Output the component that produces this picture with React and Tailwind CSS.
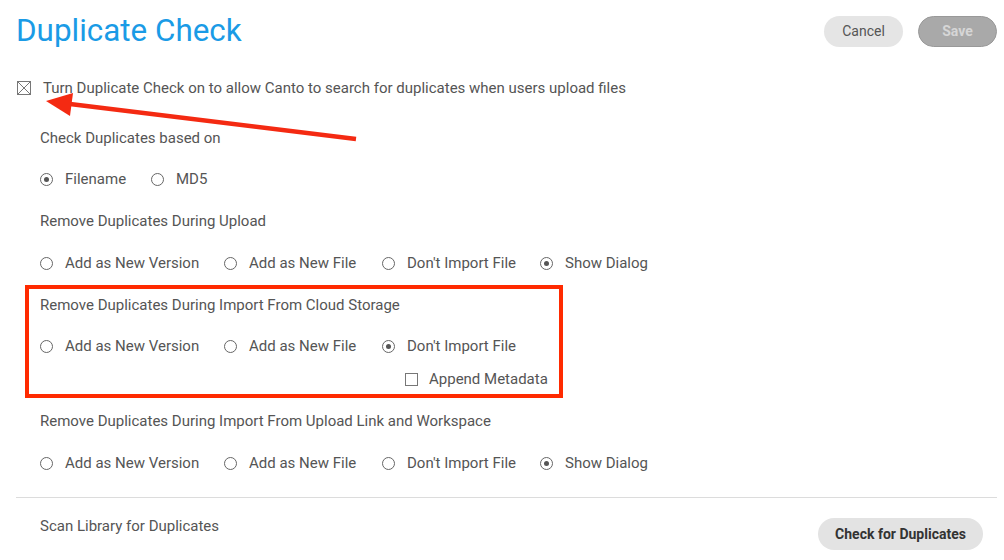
import React from 'react';

const Radio = ({ checked, label, className = '' }) => (
  <label className={`flex items-center ${className}`}>
    <span className="w-[13px] h-[13px] rounded-full border-[1.5px] border-[#666] flex items-center justify-center shrink-0">
      {checked && <span className="w-[5px] h-[5px] rounded-full bg-[#555]" />}
    </span>
    <span className="ml-[12px] text-[15px] text-[#555] whitespace-nowrap">{label}</span>
  </label>
);

const SectionLabel = ({ children, className = 'h-[42px]' }) => (
  <div className={`${className} flex items-center text-[15px] text-[#555] whitespace-nowrap`}>{children}</div>
);

const fourOptions = (selected) => (
  <div className="h-[42px] flex items-center">
    <Radio label="Add as New Version" checked={selected === 0} className="w-[184px]" />
    <Radio label="Add as New File" checked={selected === 1} className="w-[158px]" />
    <Radio label="Don't Import File" checked={selected === 2} className="w-[158px]" />
    <Radio label="Show Dialog" checked={selected === 3} />
  </div>
);

export default function App() {
  return (
    <div className="relative w-[1004px] h-[560px] bg-white overflow-hidden" style={{ fontFamily: 'Roboto, "Liberation Sans", sans-serif' }}>
      {/* header */}
      <div className="h-[62px] flex items-center justify-between pl-[16px] pr-[7px]">
        <h1 className="text-[31.4px] font-normal text-[#1a9be6] leading-none">Duplicate Check</h1>
        <div className="flex items-center gap-[15px]">
          <button className="w-[79px] h-[31px] rounded-full bg-[#e5e5e5] text-[14px] text-[#555]">Cancel</button>
          <button className="w-[79px] h-[31px] rounded-full bg-[#a9a9a9] border border-[#999] text-[14px] font-bold text-[#d6d6d6]">Save</button>
        </div>
      </div>

      {/* enable checkbox */}
      <div className="mt-[5px] h-[42px] flex items-center pl-[17px]">
        <svg width="14" height="14" viewBox="0 0 14 14" className="shrink-0">
          <rect x="0.5" y="0.5" width="13" height="13" fill="none" stroke="#777" strokeWidth="1" />
          <path d="M1 1 L13 13 M13 1 L1 13" stroke="#777" strokeWidth="1" />
        </svg>
        <span className="ml-[12px] text-[15px] text-[#555] whitespace-nowrap">Turn Duplicate Check on to allow Canto to search for duplicates when users upload files</span>
      </div>

      <div className="mt-[9px] pl-[40px]">
        <SectionLabel className="h-[40px]">Check Duplicates based on</SectionLabel>
        <div className="h-[42px] flex items-center">
          <Radio label="Filename" checked className="w-[111px]" />
          <Radio label="MD5" />
        </div>

        <SectionLabel>Remove Duplicates During Upload</SectionLabel>
        {fourOptions(3)}
      </div>

      {/* highlighted section */}
      <div className="mt-[1px] ml-[25px] w-[538px] border-4 border-[#ff2a00] pl-[11px] pb-[7px]">
        <SectionLabel className="h-[32px]">Remove Duplicates During Import From Cloud Storage</SectionLabel>
        <div className="h-[50px] flex items-center">
          <Radio label="Add as New Version" className="w-[184px]" />
          <Radio label="Add as New File" className="w-[158px]" />
          <Radio label="Don't Import File" checked />
        </div>
        <div className="h-[16px] flex items-center pl-[365px]">
          <span className="w-[13px] h-[13px] border border-[#777] shrink-0" />
          <span className="ml-[11px] text-[15px] text-[#555] whitespace-nowrap">Append Metadata</span>
        </div>
      </div>

      <div className="mt-[3px] pl-[40px]">
        <SectionLabel className="h-[41px]">Remove Duplicates During Import From Upload Link and Workspace</SectionLabel>
        {fourOptions(3)}
      </div>

      <div className="mt-[13px] mr-[7px] ml-[16px] border-t border-[#dcdcdc]" />

      <div className="flex items-start justify-between pl-[40px] pr-[21px]">
        <div className="mt-[18px] leading-5 text-[15px] text-[#555]">Scan Library for Duplicates</div>
        <button className="mt-[20px] w-[165px] h-[32px] rounded-full bg-[#e3e3e3] text-[14px] font-bold text-[#333]">Check for Duplicates</button>
      </div>

      {/* annotation arrow */}
      <svg className="absolute top-0 left-0 pointer-events-none" width="1004" height="560">
        <line x1="356" y1="139" x2="70" y2="104" stroke="#f42a12" strokeWidth="4.5" />
        <polygon points="46,101 73,93 70,116" fill="#f42a12" />
      </svg>
    </div>
  );
}
